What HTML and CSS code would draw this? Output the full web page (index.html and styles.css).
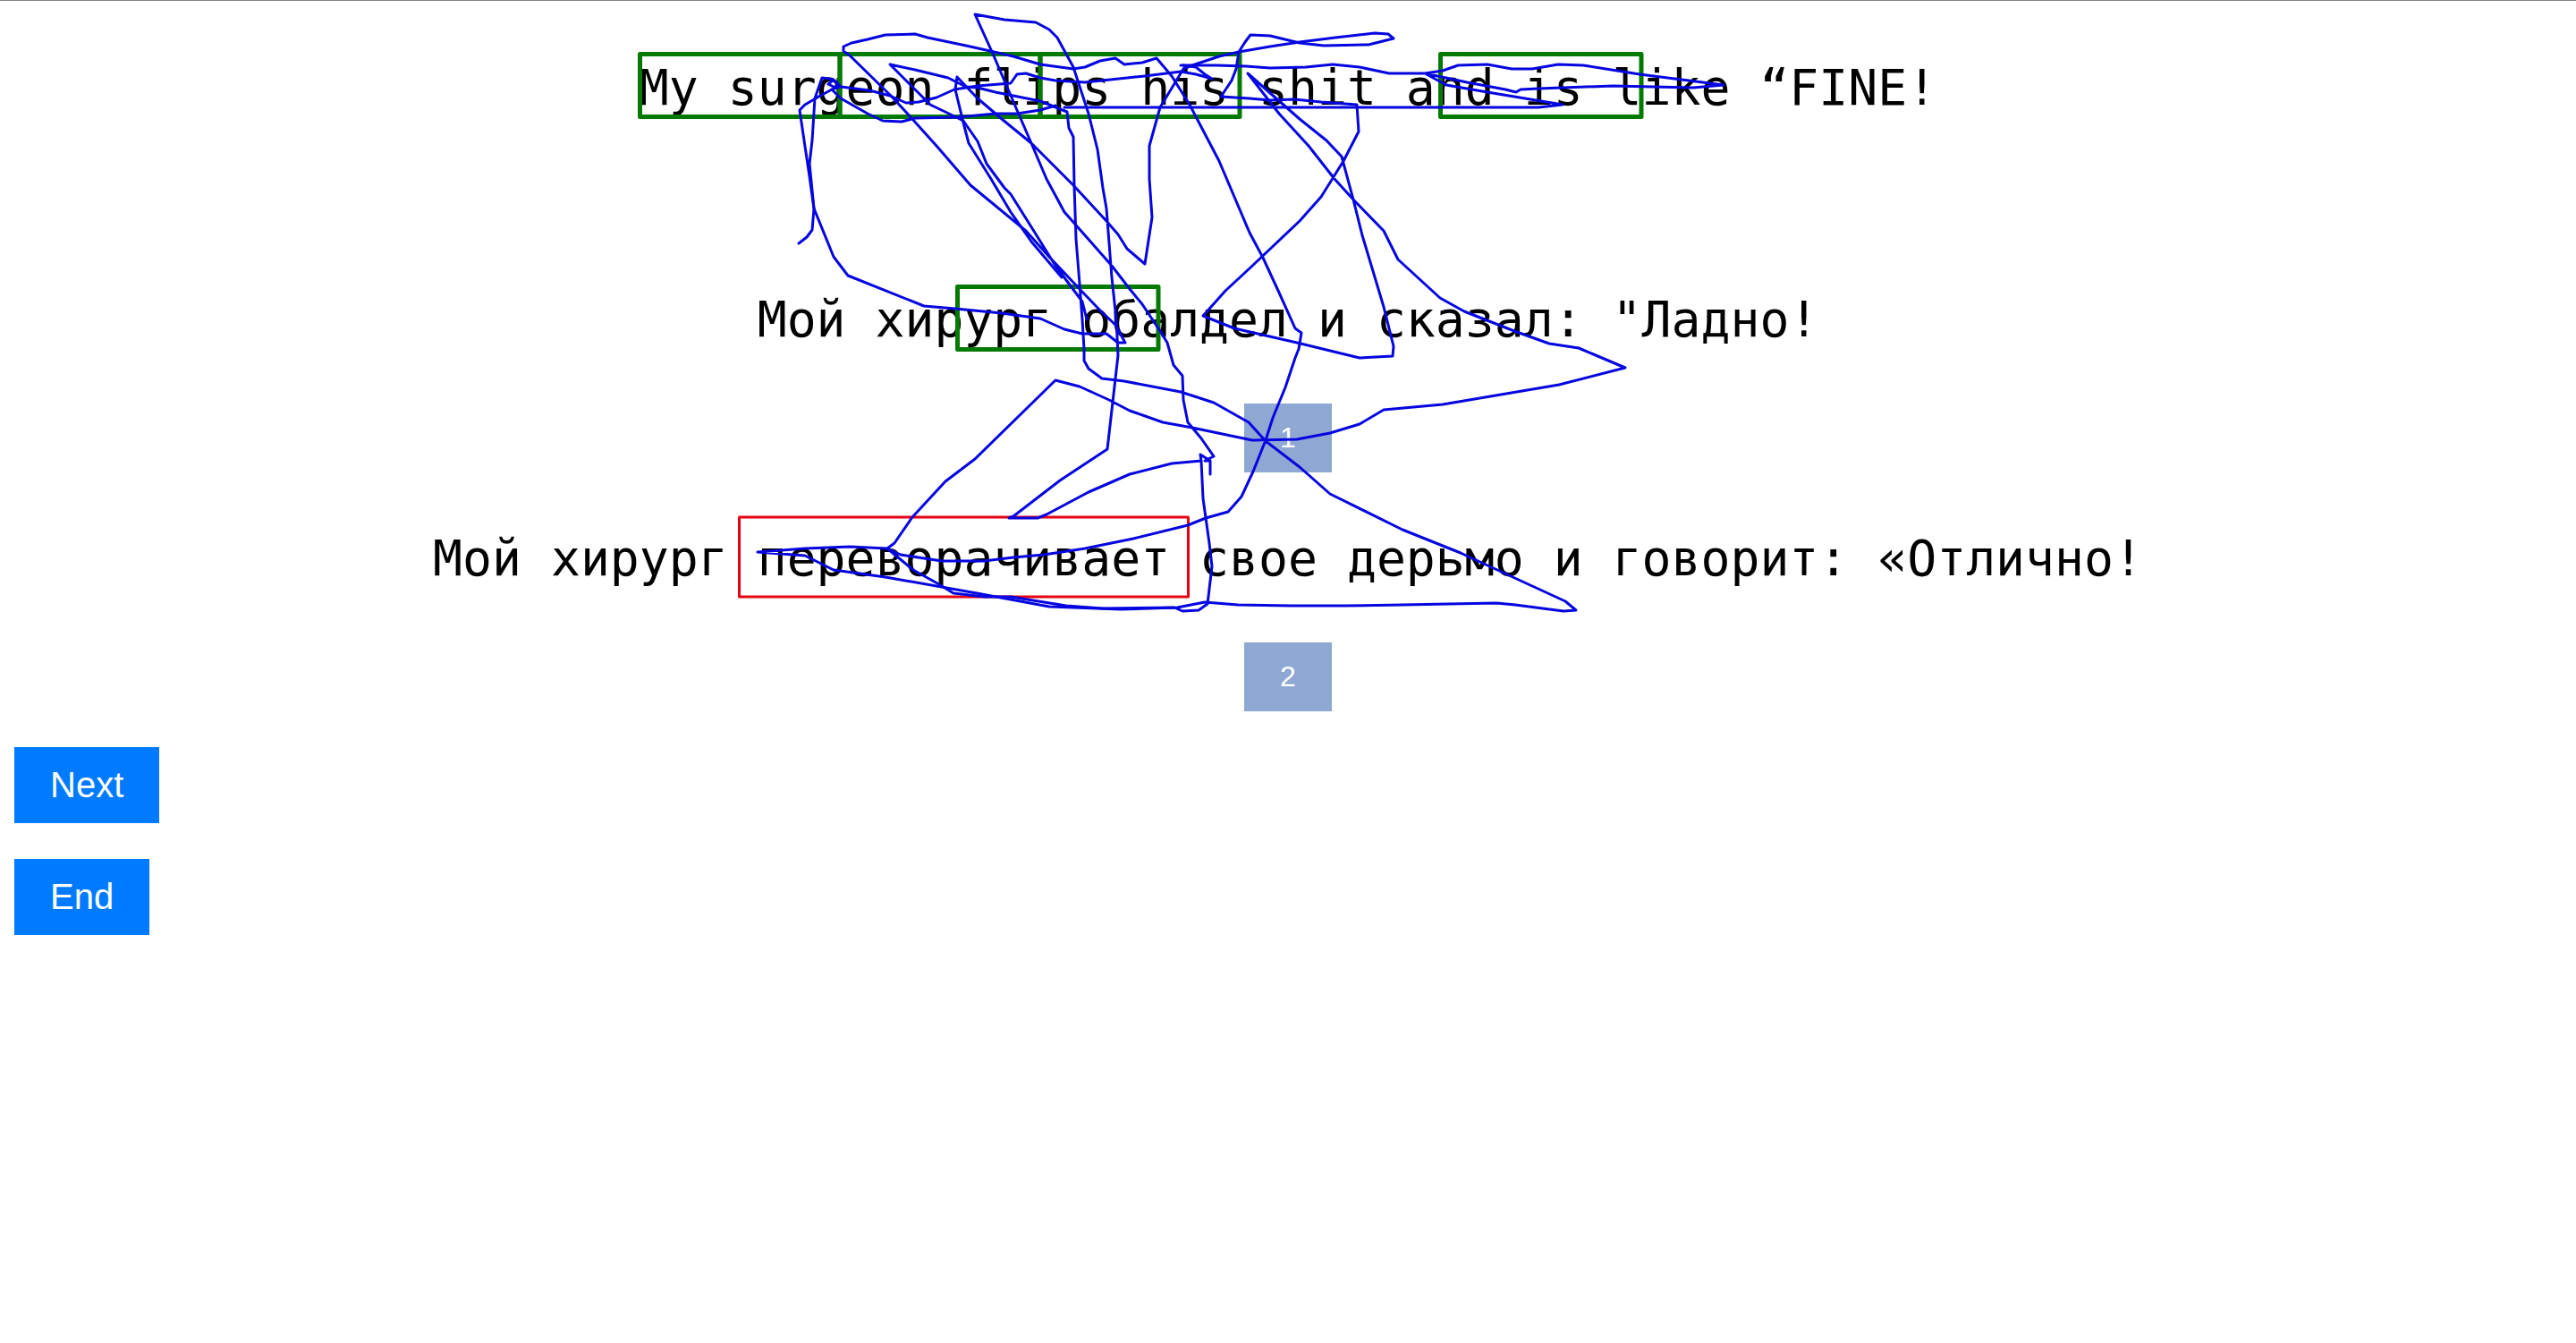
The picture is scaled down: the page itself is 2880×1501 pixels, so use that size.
FILE: index.html
```html
<!DOCTYPE html>
<html lang="ru">
<head>
    <meta charset="UTF-8">
    <title>Annotation</title>
    <link rel="stylesheet" href="styles.css">
</head>
<body>

    <div class="lines">
        <p class="line line-source">My surgeon flips his shit and is like “FINE!</p>
        <p class="line line-ref">Мой хирург обалдел и сказал: "Ладно!</p>
        <button class="choice">1</button>
        <p class="line">Мой хирург переворачивает свое дерьмо и говорит: «Отлично!</p>
        <button class="choice">2</button>
    </div>

    <div class="actions">
        <button class="action">Next</button>
        <button class="action">End</button>
    </div>

    <svg class="overlay" width="2880" height="1501" viewBox="0 0 2880 1501">
        <rect class="box-good" x="715.5" y="60.5" width="223.5" height="70"/>
        <rect class="box-good" x="939" y="60.5" width="224" height="70"/>
        <rect class="box-good" x="1163" y="60.5" width="223" height="70"/>
        <rect class="box-good" x="1610.5" y="60.5" width="224.5" height="70"/>
        <rect class="box-good" x="1070.5" y="320.5" width="224.5" height="70"/>
        <rect class="box-bad" x="826.5" y="578" width="502" height="89"/>

        <path class="scribble" d="M893 272 L902 265 908 257 910 233 905 183 908 157 911 110 919 87 928 88 936 92 934 98 926 94 932 89 940 97 972 101 995 107 1013 115 1027 114 1047 109 1067 100 1093 96 1130 93 1137 83 1147 82 1163 87 1180 90 1213 92 1280 85 1320 80 1337 83 1355 88 1347 83 1337 75 1323 73"/>
        <path class="scribble" d="M939 97 L930 100 917 107 900 117 894 123 899 157 905 197 910 233 932 287 948 308 1033 342 1068 345 1120 350 1163 356 1190 368 1210 373 1237 373 1250 383 1258 383 1247 363 1230 347 1207 323 1173 287 1147 258 1085 207 1047 163 1020 133 997 108 950 62 943 57 943 52 952 48 970 44 990 39 1023 38 1037 42 1080 51 1107 57 1133 63 1163 72 1200 77 1213 75 1230 68 1247 65 1257 72 1277 70 1293 65 1310 85 1330 117 1363 180 1380 220 1397 260 1412 288 1430 327 1448 367 1455 372 1452 390 1448 400 1437 433 1423 467 1415 492 1401 527 1388 555 1373 572 1348 579 1328 587 1267 602 1213 613 1167 620 1133 623 1100 627 1053 627 1007 620 992 613 950 611 900 613 847 617 900 621 932 637 990 645 1092 663 1173 678 1253 681 1316 679 1347 673 1384 676 1443 677 1503 677 1568 676 1620 675 1673 674 1694 676 1748 683 1762 682 1750 672 1687 643 1633 618 1568 592 1487 552 1453 522 1415 493 1396 472 1357 450 1320 438 1257 426 1232 423 1217 412 1212 403 1212 390 1210 357 1207 317 1203 267 1201 207 1200 153 1195 143 1193 125 1163 113 1113 103 1093 98 1080 97 1060 87 1023 78 995 72 1040 117 1063 128 1077 135 1093 158 1103 183 1123 210 1130 217 1157 260 1180 297 1210 337 1215 357"/>
        <path class="scribble" d="M1187 310 L1153 270 1130 237 1108 200 1083 160 1077 137 1068 100 1070 86 1093 110 1120 133 1153 160 1200 207 1237 247 1250 262 1260 278 1280 295 1288 243 1285 200 1285 163 1297 120 1323 77 1333 73 1363 63 1385 58 1420 52 1453 47 1493 42 1537 37 1552 38 1558 43 1530 50 1480 51 1453 48 1420 40 1398 39 1392 47 1385 58 1382 77 1377 90 1365 108 1397 110 1420 112 1447 111 1477 114 1517 117 1519 147 1502 180 1477 220 1453 247 1397 300 1370 325 1345 353 1380 367 1450 383 1520 400 1557 398 1558 387 1547 343 1523 263 1513 223 1500 175 1483 157 1453 133 1395 82 1430 127 1463 163 1492 200 1513 223 1547 258 1563 290 1610 333 1637 348 1693 370 1732 384 1765 389 1817 411 1743 430 1613 452 1547 458 1520 474 1487 484 1450 491 1400 492 1333 478 1300 472 1263 459 1240 447 1207 432 1180 425 1090 513 1057 538 1020 578 1000 607 992 613 1021 637 1048 652 1066 663 1101 667 1130 667 1192 677 1233 680 1313 679 1322 683 1340 682 1350 675 1355 633 1352 607 1345 557 1343 515 1342 508 1353 515 1353 530 1353 515 1347 515 1357 510 1343 490 1328 472 1323 447 1322 420 1312 408 1305 383 1297 370 1277 340 1263 323 1243 297 1213 263 1190 237 1170 200 1153 160 1140 130 1110 60 1090 16 1123 22 1158 25 1173 33 1182 42 1200 75 1217 127 1227 167 1233 210 1237 233 1243 310 1248 357 1250 397 1238 502 1185 537 1133 577 1128 579 1160 579 1170 575 1217 550 1263 530 1310 518 1343 515"/>
        <path class="scribble" d="M1320 73 L1360 73 1393 74 1420 76 1460 75 1490 72 1520 75 1553 82 1593 82 1613 79 1630 73 1663 72 1690 77 1713 77 1742 72 1770 73 1833 83 1927 95 1893 98 1803 96 1720 99 1700 100 1695 103 1683 100 1640 92 1593 82 1617 95 1663 103 1747 117 1720 120 1320 120 1190 120"/>
        <path class="scribble" d="M930 100 L940 110 970 127 987 135 1008 136 1023 132 1070 131 1113 127 1137 127 1163 123 1180 118"/>
    </svg>

</body>
</html>
```

FILE: styles.css
```css
body {
    margin: 0;
    border-top: 1px solid #808080;
    background-color: white;
    font-family: "Liberation Sans", Arial, sans-serif;
}
.lines {
    padding-top: 65px;
    text-align: center;
}
.line {
    margin: 0 0 62px 0;
    font-family: "DejaVu Sans Mono", monospace;
    font-size: 54.75px;
    line-height: 64px;
    color: black;
    white-space: pre;
}
.line-source {
    margin-bottom: 195px;
}
button {
    display: block;
    border: none;
    color: white;
    font-family: "Liberation Sans", Arial, sans-serif;
}
.choice {
    margin: 0 auto 64px auto;
    padding: 20px 40px;
    font-size: 32px;
    line-height: 37px;
    background-color: #8fa7d3;
}
.actions {
    margin-top: -24px;
    padding-left: 16px;
}
.action {
    margin-bottom: 40px;
    padding: 20px 40px;
    font-size: 40px;
    line-height: 45px;
    background-color: #007bff;
}
.overlay {
    position: absolute;
    top: 0;
    left: 0;
    pointer-events: none;
}
.box-good, .box-bad {
    fill: none;
    stroke-linejoin: round;
}
.box-good {
    stroke: #047a04;
    stroke-width: 5;
}
.box-bad {
    stroke: #e60012;
    stroke-width: 3;
}
.scribble {
    fill: none;
    stroke: #0505e0;
    stroke-width: 3;
    stroke-linejoin: round;
    stroke-linecap: round;
}
```
